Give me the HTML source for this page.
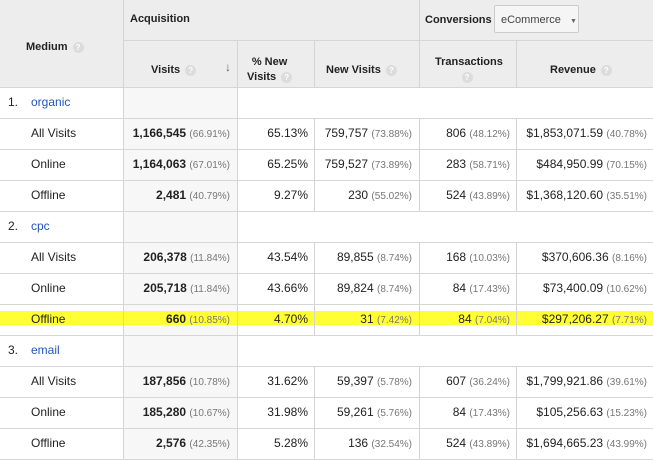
<!DOCTYPE html><html><head><style>
*{margin:0;padding:0;box-sizing:border-box}
body{width:653px;height:460px;overflow:hidden;background:#fff;font-family:"Liberation Sans",Arial,sans-serif;font-size:12px;color:#222;position:relative}
.a{position:absolute}
.hd{background:#ededed}
.vl{position:absolute;top:0;width:1px;background:#d4d4d4}
.hl{position:absolute;left:0;width:653px;height:1px;background:#d6d6d6}
.h{font-weight:bold;font-size:11px;color:#222}
.q{display:inline-block;width:11px;height:11px;border-radius:50%;background:#dcdcdc;color:#fff;font-size:8px;text-align:center;line-height:11px;font-weight:bold;vertical-align:middle;margin-left:5px}
.c{position:absolute;text-align:right;white-space:nowrap;font-size:12px}
.p{color:#777;font-size:10px}
.g{color:#2255bb;font-size:12px}
</style></head><body>
<div class="a hd" style="left:0;top:0;width:653px;height:87px"></div>
<div class="a" style="left:123px;top:87px;width:114px;height:373px;background:#f7f7f7"></div>
<div class="a" style="left:0;top:311px;width:653px;height:14px;background:#ffff33"></div>
<div class="vl" style="left:123px;height:460px"></div>
<div class="vl" style="left:237px;top:40px;height:420px"></div>
<div class="vl" style="left:314px;top:40px;height:47px"></div>
<div class="vl" style="left:419px;height:87px"></div>
<div class="vl" style="left:516px;top:40px;height:47px"></div>
<div class="hl" style="top:40px;left:123px;width:530px"></div>
<div class="hl" style="top:87px"></div>
<div class="a h" style="left:26px;top:41px">Medium<span class="q">?</span></div>
<div class="a h" style="left:130px;top:13px">Acquisition</div>
<div class="a h" style="left:425px;top:14px">Conversions</div>
<div class="a" style="left:494px;top:5px;width:85px;height:28px;background:#f5f5f5;border:1px solid #ccc;border-radius:2px;font-size:11px;color:#444;padding:8px 0 0 6px">eCommerce <span style="font-size:7px;color:#666;margin-left:6px">▼</span></div>
<div class="a h" style="left:151px;top:64px">Visits<span class="q">?</span></div>
<div class="a" style="left:225px;top:60px;color:#666;font-size:12px">↓</div>
<div class="a h" style="left:247px;top:55px;text-align:center;line-height:15px">% New<br>Visits<span class="q">?</span></div>
<div class="a h" style="left:326px;top:64px">New Visits<span class="q">?</span></div>
<div class="a h" style="left:435px;top:55px;text-align:center;line-height:15px;width:64px">Transactions<br><span class="q" style="margin:0">?</span></div>
<div class="a h" style="left:550px;top:64px">Revenue<span class="q">?</span></div>
<div id="rows"></div>
<script>
var D=[["1.","organic"],["All Visits","1,166,545","66.91%","65.13%","759,757","73.88%","806","48.12%","$1,853,071.59","40.78%"],["Online","1,164,063","67.01%","65.25%","759,527","73.89%","283","58.71%","$484,950.99","70.15%"],["Offline","2,481","40.79%","9.27%","230","55.02%","524","43.89%","$1,368,120.60","35.51%"],["2.","cpc"],["All Visits","206,378","11.84%","43.54%","89,855","8.74%","168","10.03%","$370,606.36","8.16%"],["Online","205,718","11.84%","43.66%","89,824","8.74%","84","17.43%","$73,400.09","10.62%"],["Offline","660","10.85%","4.70%","31","7.42%","84","7.04%","$297,206.27","7.71%"],["3.","email"],["All Visits","187,856","10.78%","31.62%","59,397","5.78%","607","36.24%","$1,799,921.86","39.61%"],["Online","185,280","10.67%","31.98%","59,261","5.76%","84","17.43%","$105,256.63","15.23%"],["Offline","2,576","42.35%","5.28%","136","32.54%","524","43.89%","$1,694,665.23","43.99%"]];
var h="";
D.forEach(function(r,i){var y=87+i*31,t=y+8;
h+='<div class="hl" style="top:'+(y+31)+'px"></div>';
if(r.length==2){h+='<div class="a" style="left:8px;top:'+t+'px">'+r[0]+'</div><div class="a g" style="left:31px;top:'+t+'px">'+r[1]+'</div>';}
else{h+='<div class="vl" style="left:314px;top:'+y+'px;height:31px"></div><div class="vl" style="left:419px;top:'+y+'px;height:31px"></div><div class="vl" style="left:516px;top:'+y+'px;height:31px"></div>';
h+='<div class="a" style="left:31px;top:'+t+'px">'+r[0]+'</div>';
h+='<div class="c" style="right:'+(653-230)+'px;top:'+t+'px"><b>'+r[1]+'</b> <span class="p">('+r[2]+')</span></div>';
h+='<div class="c" style="right:'+(653-308)+'px;top:'+t+'px">'+r[3]+'</div>';
h+='<div class="c" style="right:'+(653-412)+'px;top:'+t+'px">'+r[4]+' <span class="p">('+r[5]+')</span></div>';
h+='<div class="c" style="right:'+(653-510)+'px;top:'+t+'px">'+r[6]+' <span class="p">('+r[7]+')</span></div>';
h+='<div class="c" style="right:'+(653-647)+'px;top:'+t+'px">'+r[8]+' <span class="p">('+r[9]+')</span></div>';}
});
document.getElementById("rows").innerHTML=h;
</script>
</body></html>
